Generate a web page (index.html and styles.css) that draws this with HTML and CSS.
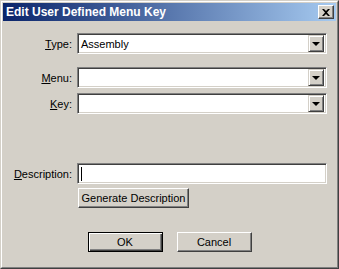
FILE: index.html
```html
<!DOCTYPE html>
<html lang="en">
<head>
  <meta charset="UTF-8" />
  <title>Edit User Defined Menu Key</title>
  <link rel="stylesheet" href="styles.css">
</head>
<body>
  <div class="window">
    <div class="frame">
      <div class="titlebar">
        <span class="title">Edit User Defined Menu Key</span>
        <div class="close-btn">
          <svg width="8" height="7" viewBox="0 0 8 7"><path d="M0 0h2l2 2 2-2h2L5 3.5 8 7H6L4 5 2 7H0l3-3.5z" fill="#000"/></svg>
        </div>
      </div>

      <div class="client">
        <div class="row row-type">
          <label class="label"><u>T</u>ype:</label>
          <div class="combo">
            <span class="combo-text">Assembly</span>
            <div class="drop-btn"><span class="arrow"></span></div>
          </div>
        </div>

        <div class="row row-menu">
          <label class="label"><u>M</u>enu:</label>
          <div class="combo">
            <span class="combo-text"></span>
            <div class="drop-btn"><span class="arrow"></span></div>
          </div>
        </div>

        <div class="row row-key">
          <label class="label"><u>K</u>ey:</label>
          <div class="combo">
            <span class="combo-text"></span>
            <div class="drop-btn"><span class="arrow"></span></div>
          </div>
        </div>

        <div class="row row-desc">
          <label class="label"><u>D</u>escription:</label>
          <div class="field"><span class="caret"></span></div>
        </div>

        <div class="row row-gen">
          <button class="btn btn-gen">Generate Description</button>
        </div>

        <div class="actions">
          <button class="btn btn-ok">OK</button>
          <button class="btn">Cancel</button>
        </div>
      </div>
    </div>
  </div>
</body>
</html>
```

FILE: styles.css
```css
* { box-sizing: border-box; }
body {
  margin: 0;
  padding: 0;
  background-color: #d4d0c8;
  font-family: 'Liberation Sans', Arial, sans-serif;
  font-size: 11px;
  color: #000;
}
.window {
  width: 339px; height: 269px;
  border: 1px solid; border-color: #d4d0c8 #404040 #404040 #d4d0c8;
}
.frame {
  height: 100%;
  border: 1px solid; border-color: #fff #808080 #808080 #fff;
  padding: 1px;
  display: flex; flex-direction: column;
}
.titlebar {
  height: 18px;
  background: linear-gradient(to right, #0a246a, #a6caf0);
  display: flex; align-items: center; justify-content: space-between;
  padding: 0 2px 0 3px;
}
.title { color: #fff; font-weight: bold; font-size: 12px; }
.close-btn {
  width: 16px; height: 14px;
  background-color: #d4d0c8;
  border: 1px solid; border-color: #fff #404040 #404040 #fff;
  box-shadow: inset -1px -1px #808080;
  display: flex; align-items: center; justify-content: center;
}
.client { flex: 1; padding-top: 12px; }
.row { display: flex; align-items: center; gap: 5px; }
.label { width: 69px; text-align: right; }
.row-menu { margin-top: 13px; }
.row-key { margin-top: 5px; }
.row-desc { margin-top: 49px; }
.row-gen { margin-top: 4px; padding-left: 75px; }
.combo, .field {
  width: 250px; height: 21px;
  background-color: #fff;
  border: 1px solid; border-color: #808080 #fff #fff #808080;
  box-shadow: inset 1px 1px #404040, inset -1px -1px #d4d0c8;
  padding: 2px;
  display: flex; align-items: center;
}
.combo-text { flex: 1; padding-left: 1px; }
.drop-btn {
  width: 16px; height: 17px;
  background-color: #d4d0c8;
  border: 1px solid; border-color: #d4d0c8 #404040 #404040 #d4d0c8;
  box-shadow: inset 1px 1px #fff, inset -1px -1px #808080;
  display: flex; align-items: center; justify-content: center;
}
.arrow {
  width: 0; height: 0;
  border-left: 4px solid transparent; border-right: 4px solid transparent;
  border-top: 4px solid #000;
  margin-top: 1px;
}
.caret { width: 1px; height: 14px; background-color: #000; margin-left: 1px; }
.btn {
  height: 20px; width: 75px;
  font-family: inherit; font-size: 11px; color: #000;
  background-color: #d4d0c8;
  border: 1px solid; border-color: #fff #404040 #404040 #fff;
  box-shadow: inset -1px -1px #808080, inset 1px 1px #d4d0c8;
  padding: 0;
}
.btn-gen { width: 111px; }
.btn-ok {
  border-color: #000;
  box-shadow: inset 1px 1px #fff, inset -1px -1px #404040, inset -2px -2px #808080;
}
.actions { display: flex; justify-content: center; gap: 14px; margin-top: 24px; }
```
